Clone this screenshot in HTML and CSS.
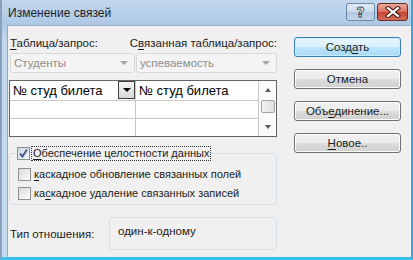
FILE: index.html
```html
<!DOCTYPE html>
<html lang="ru">
  <head>
    <meta charset="UTF-8" />
    <meta name="viewport" content="width=device-width, initial-scale=1.0" />
    <title>Изменение связей</title>
    <link rel="stylesheet" href="styles.css">
  </head>
  <body>
    <div class="window">
      <div class="titlebar">
        <span class="title">Изменение связей</span>
        <div class="caption-btns">
          <button class="cap-btn help" type="button">?</button>
          <button class="cap-btn close" type="button">
            <svg width="16" height="12" viewBox="0 0 16 12">
              <path d="M3 2 L13 10 M13 2 L3 10" stroke="#4a1d17" stroke-width="4.2" stroke-linecap="square" />
              <path d="M3 2 L13 10 M13 2 L3 10" stroke="#ffffff" stroke-width="2.2" stroke-linecap="square" />
            </svg>
          </button>
        </div>
      </div>

      <div class="client">
        <div class="main">
          <div class="labels">
            <span class="lbl lbl-left"><u>Т</u>аблица/запрос:</span>
            <span class="lbl lbl-right">С<u>в</u>язанная таблица/запрос:</span>
          </div>

          <div class="combos">
            <div class="combo combo-left">
              <span>Студенты</span>
              <i class="combo-arrow"></i>
            </div>
            <div class="combo combo-right">
              <span>успеваемость</span>
              <i class="combo-arrow"></i>
            </div>
          </div>

          <div class="grid">
            <table class="fields">
              <tr class="row-first">
                <td class="cell-left">
                  <span>№ студ билета</span>
                  <span class="dd-btn"><i></i></span>
                </td>
                <td class="cell-right">№ студ билета</td>
              </tr>
              <tr class="row-mid"><td class="cell-left"></td><td class="cell-right"></td></tr>
              <tr class="row-last"><td class="cell-left"></td><td class="cell-right"></td></tr>
            </table>
            <div class="vscroll">
              <i class="sc-up"></i>
              <div class="sc-thumb"></div>
              <i class="sc-down"></i>
            </div>
          </div>

          <fieldset class="group">
            <legend>
              <label class="check">
                <span class="box checked">
                  <svg width="11" height="11" viewBox="0 0 11 11">
                    <path d="M2 5.5 L4.5 8.5 L9 1.5" fill="none" stroke="#4a5d8f" stroke-width="2" />
                  </svg>
                </span>
                <span class="focus"><u>О</u>беспечение целостности данных</span>
              </label>
            </legend>
            <label class="check">
              <span class="box"></span>
              <span class="text"><u>к</u>аскадное обновление связанных полей</span>
            </label>
            <label class="check">
              <span class="box"></span>
              <span class="text">ка<u>с</u>кадное удаление связанных записей</span>
            </label>
          </fieldset>

          <div class="type-row">
            <span class="type-label">Тип отношения:</span>
            <div class="type-box">один-к-одному</div>
          </div>
        </div>

        <div class="side">
          <button class="btn default" type="button">Созд<u>а</u>ть</button>
          <button class="btn" type="button">Отмена</button>
          <button class="btn" type="button">Объ<u>е</u>динение...</button>
          <button class="btn" type="button"><u>Н</u>овое..</button>
        </div>
      </div>
    </div>
  </body>
</html>
```

FILE: styles.css
```css
body {
  margin: 0;
  font-family: "Liberation Sans", Arial, sans-serif;
  font-size: 11.5px;
  color: #1b1b1b;
  background: #3bbfe6;
}
u {
  text-decoration-thickness: 1px;
  text-underline-offset: 2px;
}
.window {
  width: 413px;
  height: 260px;
  box-sizing: border-box;
  display: flex;
  flex-direction: column;
  background: linear-gradient(#c3d7ed, #aec8e4 24px, #c4d8ee 40px, #c7daee);
  border-left: 2px solid #8aa1bb;
  border-right: 2px solid #3aa6d6;
  border-bottom: 3px solid #3bbfe6;
}

/* заголовок */
.titlebar {
  height: 25px;
  display: flex;
  align-items: flex-start;
  justify-content: space-between;
  padding-left: 6px;
  flex-shrink: 0;
}
.title {
  margin-top: 6px;
  color: #1e1e2a;
  font-size: 12px;
}
.caption-btns {
  display: flex;
  gap: 2px;
  margin-top: 3px;
  margin-right: 3px;
}
.cap-btn {
  height: 18px;
  padding: 0;
  border-radius: 3px;
  display: flex;
  align-items: center;
  justify-content: center;
}
.cap-btn.help {
  width: 29px;
  border: 1px solid #6c86a6;
  background: linear-gradient(#e4edf7, #c8d8ea 50%, #b2c8e1 51%, #c3d6ea);
  color: #f2f5f8;
  font-family: "DejaVu Sans", sans-serif;
  font-weight: bold;
  font-size: 14px;
  line-height: 1;
  -webkit-text-stroke: 0.8px #34465c;
}
.cap-btn.close {
  width: 31px;
  border: 1px solid #6e2b22;
  background: linear-gradient(#e8a999, #d8725f 50%, #c6452f 51%, #d1705c);
}

/* клиентская область */
.client {
  flex: 1;
  display: flex;
  background: #f0f0f0;
  border-top: 1px solid #98b0cb;
  border-left: 1px solid #91a9c5;
  border-right: 1px solid #e8f2fb;
  border-bottom: 1px solid #e8f2fb;
  margin-left: 5px;
  padding-left: 1px;
}
.main {
  width: 268px;
  display: flex;
  flex-direction: column;
}
.labels {
  display: flex;
  margin-top: 10px;
  height: 15px;
  line-height: 15px;
  white-space: nowrap;
}
.lbl-left {
  width: 125px;
  padding-left: 1px;
}
.combos {
  display: flex;
  gap: 1px;
  margin-top: 2px;
  padding-left: 1px;
}
.combo {
  height: 20px;
  box-sizing: border-box;
  border: 1px solid #d9d9d9;
  border-radius: 3px;
  background: #f4f4f4;
  color: #8d8d8d;
  display: flex;
  align-items: center;
  justify-content: space-between;
  padding: 0 6px 0 3px;
}
.combo-left {
  width: 125px;
}
.combo-right {
  flex: 1;
}
.combo-arrow {
  width: 0;
  height: 0;
  border-left: 4px solid transparent;
  border-right: 4px solid transparent;
  border-top: 4px solid #a6a6a6;
}

/* сетка полей */
.grid {
  margin-top: 7px;
  height: 57px;
  box-sizing: border-box;
  border: 1px solid #646464;
  background: #fff;
  display: flex;
}
.fields {
  flex: 1;
  border-collapse: collapse;
  font-size: 13px;
  color: #000;
}
.fields td {
  padding: 0 0 0 3px;
  border-right: 1px solid #c8c8c8;
  border-bottom: 1px solid #c8c8c8;
}
.row-first td {
  height: 19px;
}
.row-mid td {
  height: 17px;
}
.row-last td {
  height: 17px;
  border-bottom: none;
}
.cell-left {
  width: 122px;
  position: relative;
}
.dd-btn {
  position: absolute;
  right: 0;
  top: 0;
  width: 17px;
  height: 18px;
  box-sizing: border-box;
  border: 1px solid #3f3f3f;
  background: linear-gradient(#f4f4f4, #d8d8d8);
  display: flex;
  align-items: center;
  justify-content: center;
}
.dd-btn i {
  width: 0;
  height: 0;
  border-left: 4px solid transparent;
  border-right: 4px solid transparent;
  border-top: 4px solid #000;
}
.vscroll {
  width: 17px;
  display: flex;
  flex-direction: column;
  align-items: center;
  background: #fafafa;
}
.sc-up,
.sc-down {
  width: 0;
  height: 0;
  border-left: 3.5px solid transparent;
  border-right: 3.5px solid transparent;
}
.sc-up {
  margin-top: 7px;
  border-bottom: 4px solid #5c5c5c;
}
.sc-thumb {
  margin-top: 8px;
  width: 14px;
  height: 13px;
  box-sizing: border-box;
  border: 1px solid #a3a3a3;
  border-radius: 2px;
  background: linear-gradient(90deg, #f2f2f2, #e0e0e0);
}
.sc-down {
  margin-top: 12px;
  border-top: 4px solid #5c5c5c;
}

/* флажки */
.group {
  margin: 10px 0 0;
  height: 58px;
  box-sizing: border-box;
  border: 1px solid #d5dfe5;
  border-radius: 3px;
  padding: 8px 0 0 8px;
  display: flex;
  flex-direction: column;
  gap: 6px;
}
.group legend {
  padding: 0;
  margin-left: -1px;
}
.check {
  display: flex;
  align-items: center;
  gap: 2px;
  height: 13px;
  line-height: 13px;
  font-size: 11px;
}
.box {
  width: 13px;
  height: 13px;
  box-sizing: border-box;
  border: 1px solid #8e8f8f;
  background: linear-gradient(135deg, #dcdcdc, #fbfbfb);
  display: flex;
  align-items: center;
  justify-content: center;
}
.box.checked {
  background: linear-gradient(135deg, #cfd8e6, #f4f6fa);
}
.focus {
  outline: 1px dotted #333;
  padding: 0 1px;
}
.text {
  padding-left: 1px;
}

/* тип отношения */
.type-row {
  margin-top: 12px;
  display: flex;
  align-items: center;
}
.type-label {
  width: 99px;
  padding-left: 1px;
}
.type-box {
  flex: 1;
  height: 33px;
  box-sizing: border-box;
  border: 1px solid #d5dfe5;
  border-radius: 3px;
  padding: 7px 0 0 8px;
}

/* кнопки */
.side {
  margin-left: 17px;
  padding-top: 11px;
  display: flex;
  flex-direction: column;
  gap: 12px;
}
.btn {
  width: 107px;
  height: 20px;
  padding: 0;
  border: 1px solid #707070;
  border-radius: 3px;
  background: linear-gradient(#f2f2f2, #ebebeb 50%, #dddddd 51%, #cfcfcf);
  font-family: inherit;
  font-size: 11.5px;
  color: #1b1b1b;
  box-shadow: inset 0 0 0 1px #fcfcfc;
}
.btn.default {
  border-color: #3c7fb1;
  background: linear-gradient(#eaf6fd, #d9f0fc 50%, #bee6fd 51%, #a7d9f5);
  box-shadow: inset 0 0 0 1px #c9ecfb;
}
```
